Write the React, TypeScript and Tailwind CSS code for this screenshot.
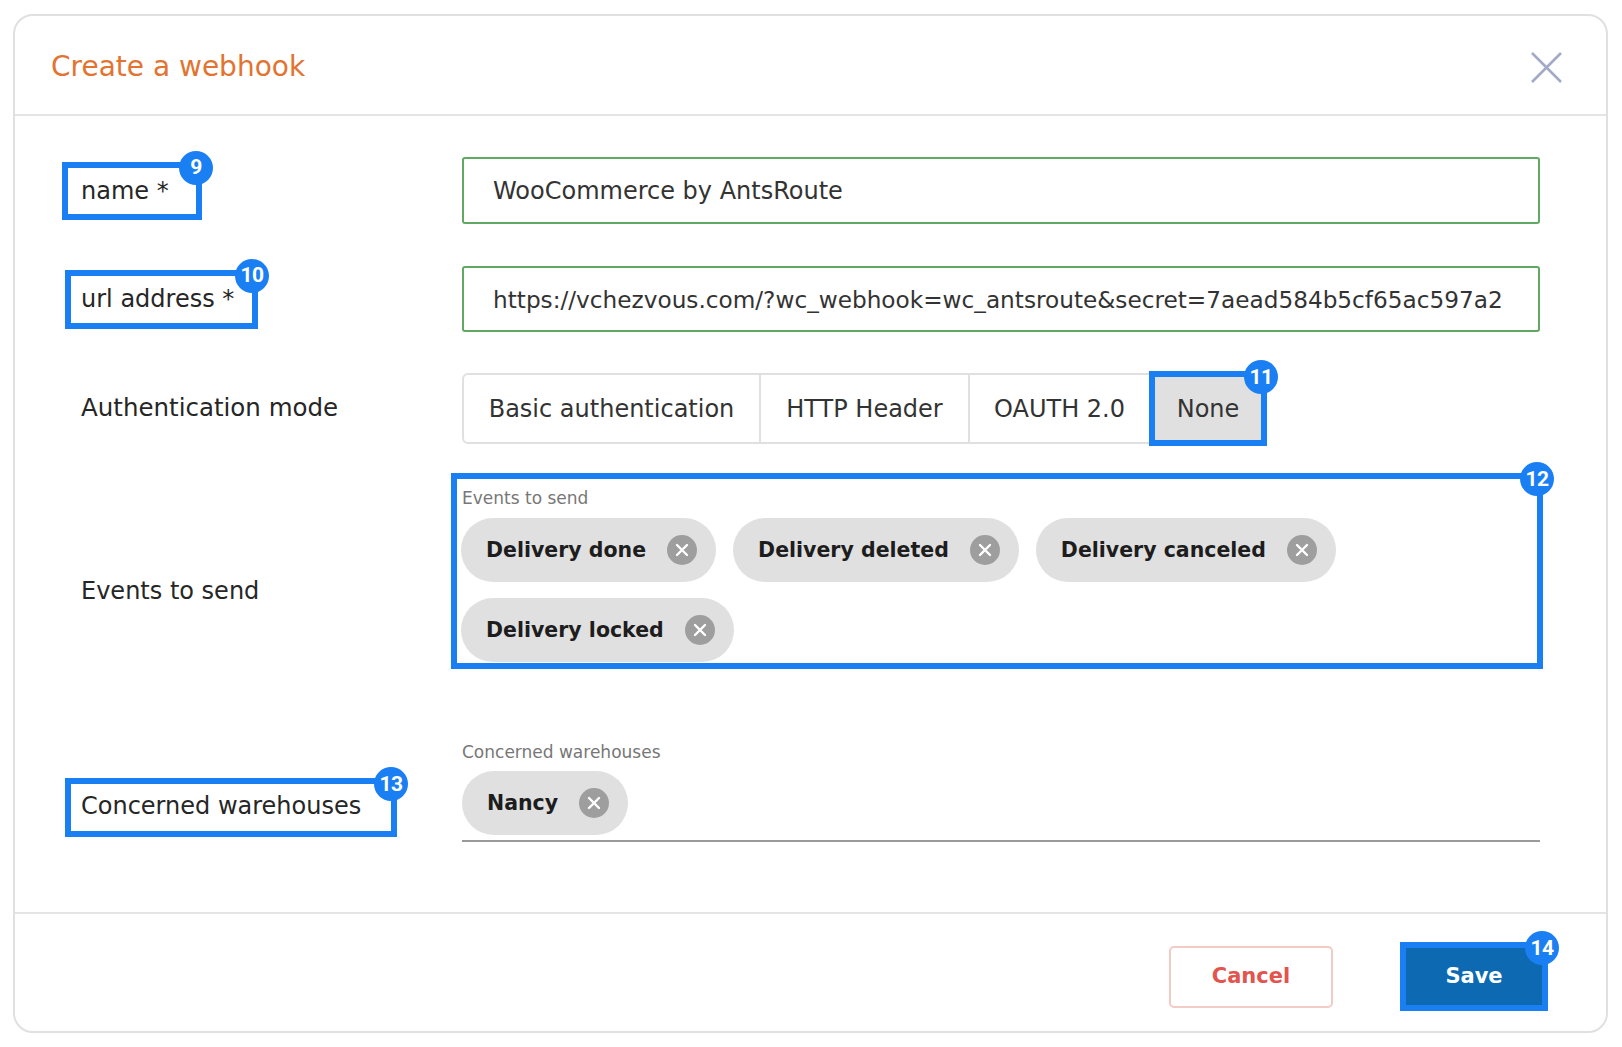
import React from "react";

const BLUE = "border-[#1b7ff4]";

function Badge({n}: {n: number}) {
    return (
        <span className="absolute -top-[17px] -right-[17px] w-[34px] h-[34px] rounded-full bg-[#1b7ff4] text-white text-[21px] font-bold leading-none tracking-tight flex items-center justify-center font-['Roboto',sans-serif] z-10">
            {n}
        </span>
    );
}

function ChipClose() {
    return (
        <svg width="30" height="30" viewBox="0 0 30 30" className="shrink-0">
            <circle cx="15" cy="15" r="15" fill="#9e9e9e"/>
            <path d="M10 10 L20 20 M20 10 L10 20" stroke="#ffffff" strokeWidth="2.4" strokeLinecap="round"/>
        </svg>
    );
}

function Chip({label}: {label: string}) {
    return (
        <div className="h-[64px] rounded-full bg-[#e0e0e0] flex items-center gap-[21px] pl-[25px] pr-[19px]">
            <span className="text-[20.5px] font-bold text-[#1d1d1d] whitespace-nowrap">{label}</span>
            <ChipClose/>
        </div>
    );
}

export default function App() {
    const events = ["Delivery done", "Delivery deleted", "Delivery canceled", "Delivery locked"];

    return (
        <div className="min-h-screen bg-white pt-[14px] pl-[13px] font-['DejaVu_Sans',sans-serif] text-[#262626]">
            <div className="w-[1595px] h-[1019px] border-2 border-[#e0e0e0] rounded-[20px] flex flex-col">
                {/* header */}
                <div className="h-[100px] shrink-0 border-b-2 border-[#e4e4e4] flex items-center justify-between pl-[36px] pr-[44px]">
                    <h2 className="text-[28px] text-[#e27331] mt-[3px]">Create a webhook</h2>
                    <svg width="31" height="31" viewBox="0 0 31 31" className="mt-[5px]">
                        <path d="M1 1 L30 30 M30 1 L1 30" stroke="#a3aac8" strokeWidth="2.6"/>
                    </svg>
                </div>

                {/* body */}
                <div className="flex-1 px-[66px] pt-[41px] flex flex-col">
                    <div className="flex items-center h-[67px]">
                        <div className="w-[381px] shrink-0">
                            <div className={`relative flex items-center h-[58px] w-[140px] -ml-[19px] pl-[13px] border-[6px] ${BLUE} text-[24px]`}>
                                name *
                                <Badge n={9}/>
                            </div>
                        </div>
                        <div className="flex-1 h-full border-2 border-[#60a863] rounded-[3px]">
                            <input readOnly value="WooCommerce by AntsRoute"
                                   className="w-full h-full px-[29px] text-[24px] text-[#333] bg-transparent outline-none"/>
                        </div>
                    </div>

                    <div className="flex items-center h-[66px] mt-[42px]">
                        <div className="w-[381px] shrink-0">
                            <div className={`relative flex items-center h-[59px] w-[193px] -ml-[16px] pl-[10px] border-[6px] ${BLUE} text-[24px]`}>
                                url address *
                                <Badge n={10}/>
                            </div>
                        </div>
                        <div className="flex-1 h-full border-2 border-[#60a863] rounded-[3px]">
                            <input readOnly value="https://vchezvous.com/?wc_webhook=wc_antsroute&secret=7aead584b5cf65ac597a2"
                                   className="w-full h-full pl-[29px] pr-[26px] text-[23.2px] text-[#333] bg-transparent outline-none"/>
                        </div>
                    </div>

                    <div className="flex items-center h-[71px] mt-[41px]">
                        <div className="w-[381px] shrink-0 text-[24.5px]">Authentication mode</div>
                        <div className="flex h-[71px] border-2 border-[#e0e0e0] rounded-[6px] text-[24px] text-[#333]">
                            <div className="w-[297px] border-r-2 border-[#e0e0e0] flex items-center justify-center">Basic authentication</div>
                            <div className="w-[209px] border-r-2 border-[#e0e0e0] flex items-center justify-center">HTTP Header</div>
                            <div className="w-[179px] flex items-center justify-center">OAUTH 2.0</div>
                            <div className={`relative w-[118px] h-[75px] -my-[4px] -mr-[2px] border-[6px] ${BLUE} bg-[#e0e0e0] flex items-center justify-center`}>
                                None
                                <Badge n={11}/>
                            </div>
                        </div>
                    </div>

                    <div className="flex items-center mt-[29px]">
                        <div className="w-[381px] shrink-0 text-[24px]">Events to send</div>
                        <div className="pb-[40px]">
                            <div className={`relative w-[1092px] h-[196px] -ml-[11px] border-[6px] ${BLUE} pl-[4px] pt-[8px]`}>
                                <div className="text-[17px] leading-[22px] text-[#777] pl-[1px]">Events to send</div>
                                <div className="mt-[9px] flex flex-wrap gap-x-[17px] gap-y-[16px]">
                                    {events.map((e) => (
                                        <Chip key={e} label={e}/>
                                    ))}
                                </div>
                                <Badge n={12}/>
                            </div>
                        </div>
                    </div>

                    <div className="flex items-end mt-[32px]">
                        <div className="w-[381px] shrink-0">
                            <div className={`relative flex items-center h-[59px] w-[332px] -ml-[16px] pl-[10px] pb-[3px] mb-[5px] border-[6px] ${BLUE} text-[24px]`}>
                                Concerned warehouses
                                <Badge n={13}/>
                            </div>
                        </div>
                        <div className="flex-1 border-b-2 border-[#9a9a9a] pb-[5px]">
                            <div className="text-[17px] leading-[22px] text-[#777]">Concerned warehouses</div>
                            <div className="mt-[8px] flex">
                                <Chip label="Nancy"/>
                            </div>
                        </div>
                    </div>
                </div>

                {/* footer */}
                <div className="h-[119px] shrink-0 border-t-2 border-[#e4e4e4] flex items-center justify-end gap-[67px] pr-[58px] pt-[8px]">
                    <button className="w-[164px] h-[62px] border-2 border-[#f3cbc5] rounded-[5px] text-[21px] font-bold text-[#e2544e]">
                        Cancel
                    </button>
                    <button className={`relative w-[148px] h-[69px] border-[6px] ${BLUE} bg-[#0d6ab2] text-[21px] font-bold text-white`}>
                        Save
                        <Badge n={14}/>
                    </button>
                </div>
            </div>
        </div>
    );
}
